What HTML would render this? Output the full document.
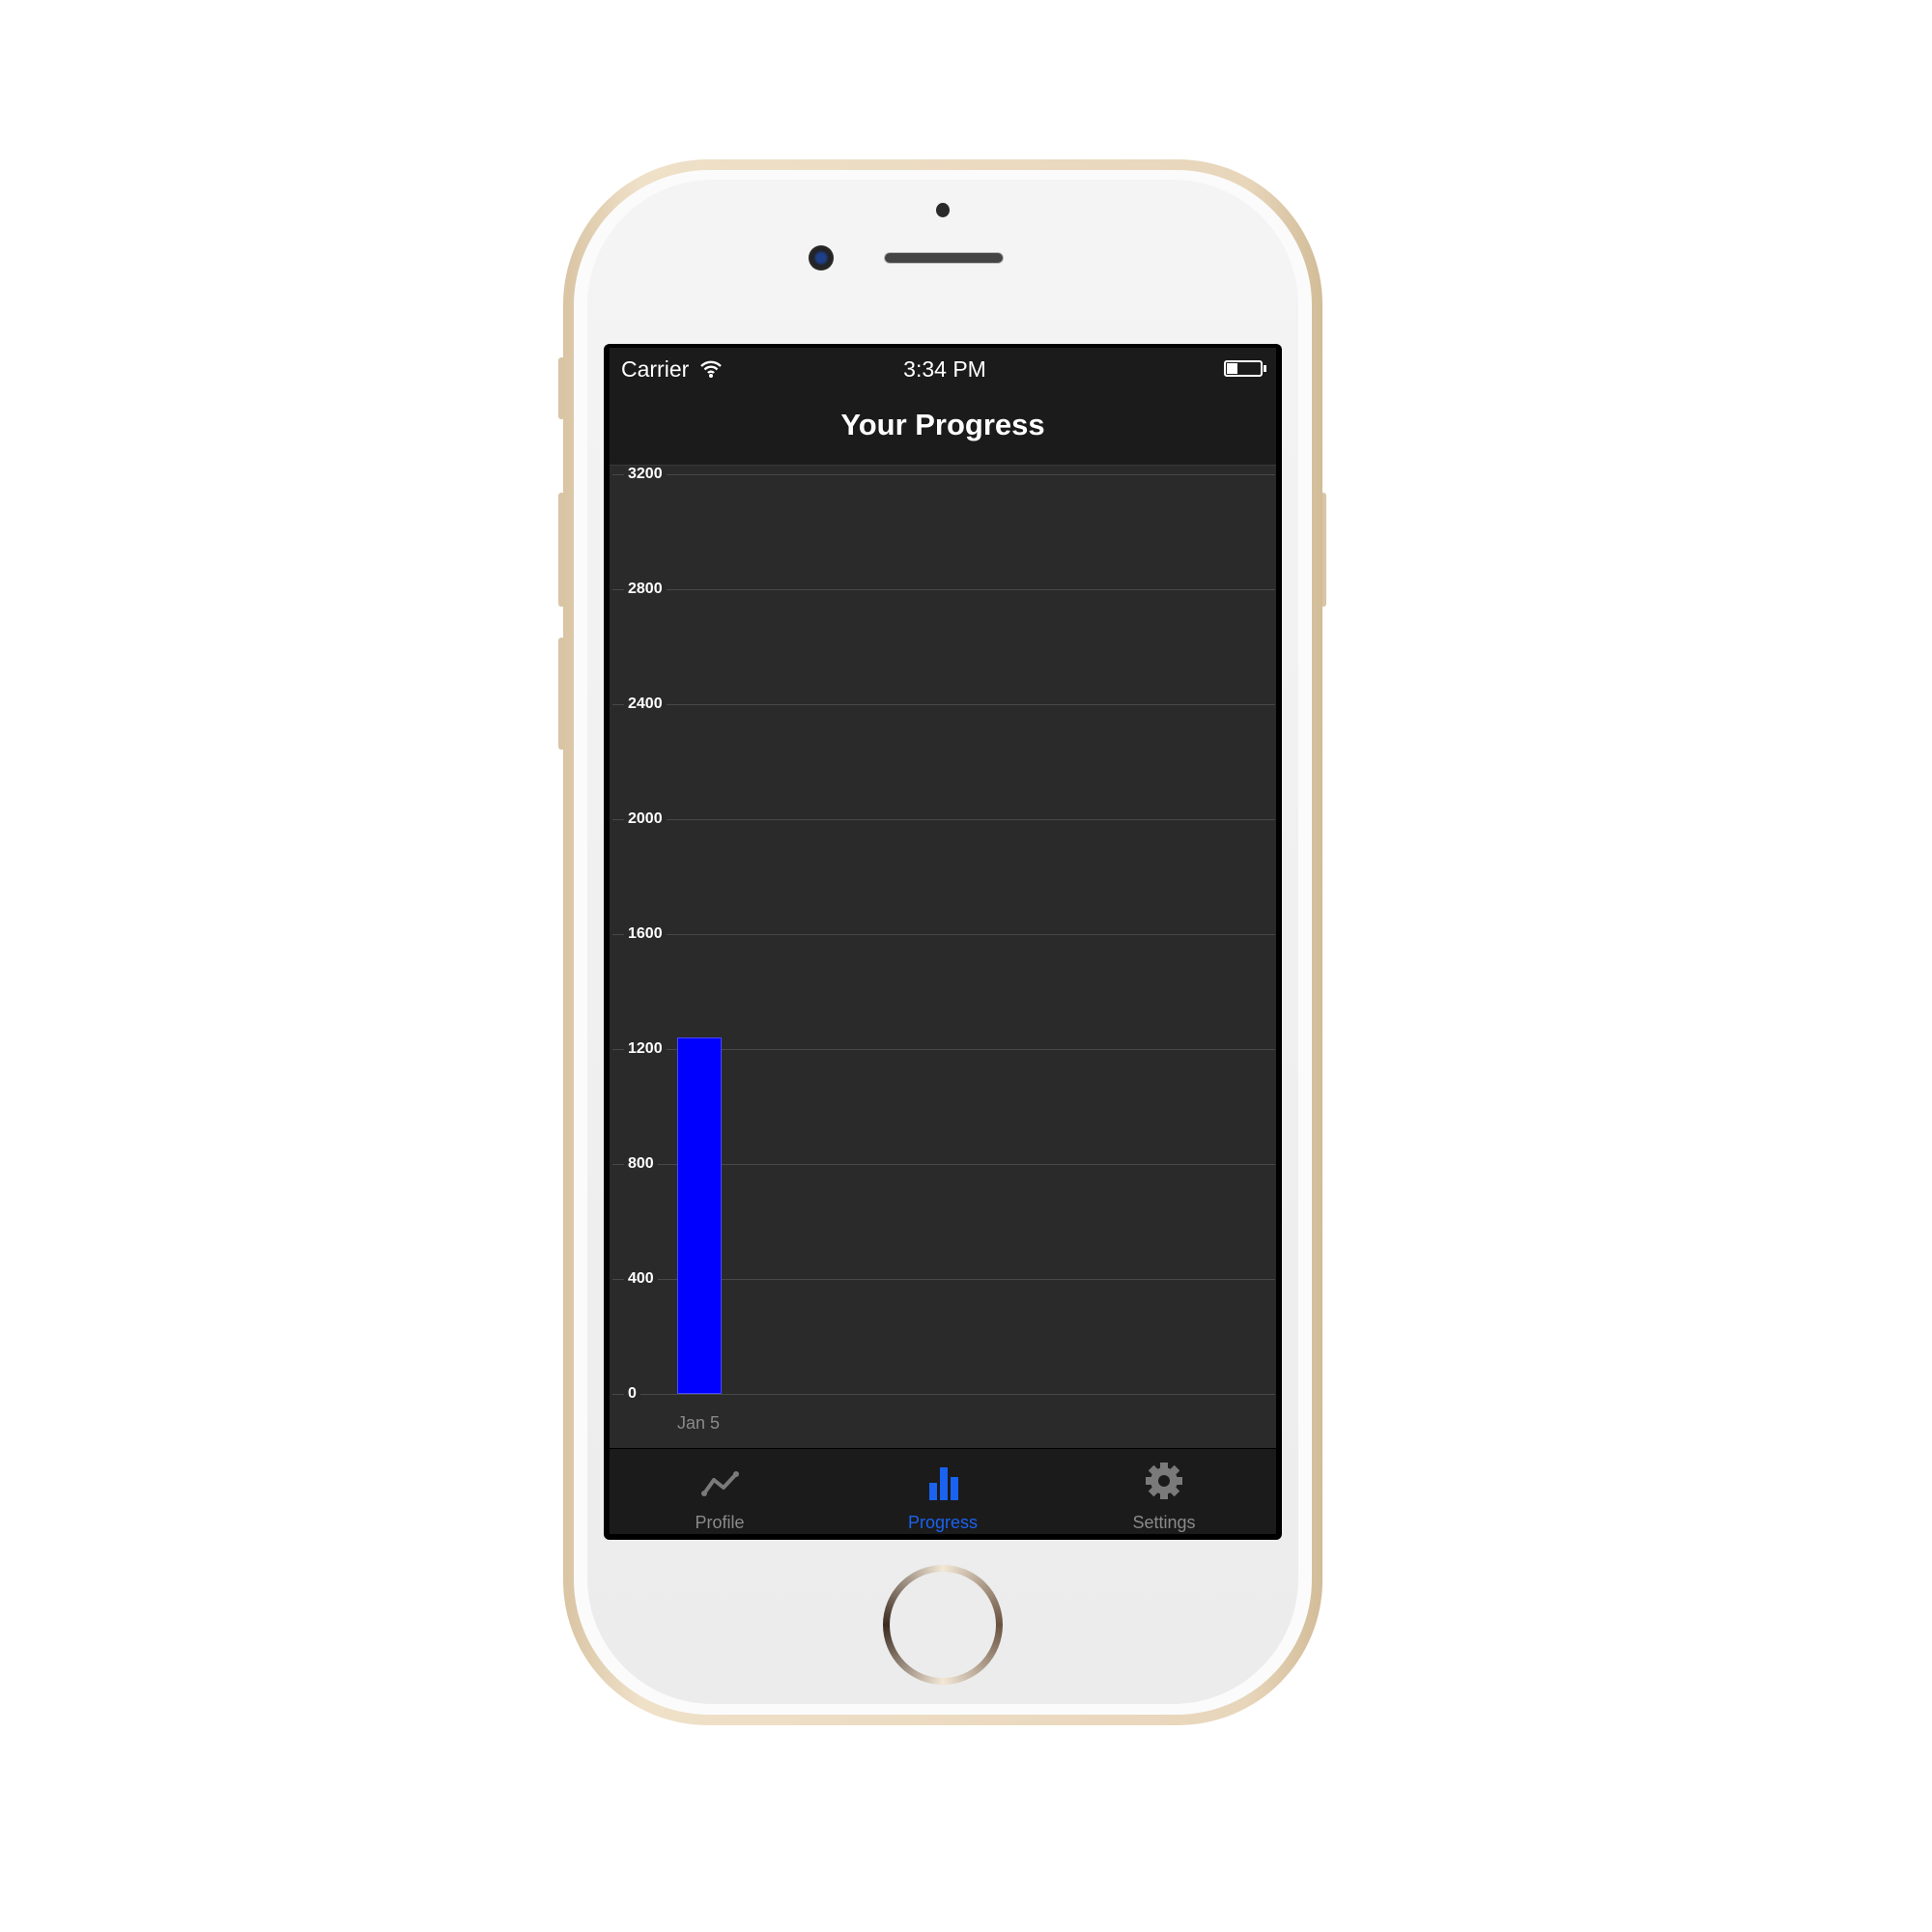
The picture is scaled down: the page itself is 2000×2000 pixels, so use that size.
<!DOCTYPE html>
<html><head><meta charset="utf-8"><style>
*{margin:0;padding:0;box-sizing:border-box}
body{width:2000px;height:2000px;background:#fff;position:relative;overflow:hidden;font-family:"Liberation Sans",sans-serif}
.a{position:absolute}
.body{left:583px;top:165px;width:786px;height:1621px;border-radius:150px;background:linear-gradient(90deg,#d9c4a3,#efe0c8 10%,#e8d6bb 90%,#d2bc98);}
.face{left:594px;top:176px;width:764px;height:1599px;border-radius:140px;background:#fbfbfb;}
.face2{left:608px;top:186px;width:736px;height:1578px;border-radius:130px;background:linear-gradient(#f4f4f4,#ebeceb);}
.btn{background:#d8c5a5;width:7px;border-radius:3px}
.screen{left:625px;top:356px;width:702px;height:1238px;background:#000;border-radius:6px}
.lbl{color:#fff;font-weight:bold;font-size:16px;position:absolute;left:650px;line-height:16px}
.grid{position:absolute;left:634px;width:686px;height:1px;background:#484848}
.tab{position:absolute;top:1566px;font-size:18px;width:200px;text-align:center;color:#8a8a8a}
</style></head><body>
<div class="a btn" style="left:578px;top:370px;height:64px"></div>
<div class="a btn" style="left:578px;top:510px;height:118px"></div>
<div class="a btn" style="left:578px;top:660px;height:116px"></div>
<div class="a btn" style="left:1366px;top:510px;height:118px"></div>
<div class="a body"></div>
<div class="a face"></div>
<div class="a face2"></div>
<div class="a" style="left:969px;top:210px;width:14px;height:15px;border-radius:50%;background:#2a2a2a"></div>
<div class="a" style="left:837px;top:254px;width:26px;height:26px;border-radius:50%;background:radial-gradient(#1f3f8a 25%,#222 45%,#333)"></div>
<div class="a" style="left:915px;top:261px;width:124px;height:12px;border-radius:6px;background:#444;border:1px solid #bbb"></div>
<div class="a screen"></div>
<div class="a" style="left:631px;top:360px;width:690px;height:121px;background:#1b1b1b"></div>
<div class="a" style="left:643px;top:369px;color:#fff;font-size:23px">Carrier</div>
<svg class="a" style="left:724px;top:372px" width="24" height="20" viewBox="0 0 24 20"><path d="M2 7a14 14 0 0 1 20 0M5.5 10.5a9 9 0 0 1 13 0M9 14a4 4 0 0 1 6 0" stroke="#fff" stroke-width="2.4" fill="none"/><circle cx="12" cy="17" r="2" fill="#fff"/></svg>
<div class="a" style="left:878px;top:369px;width:200px;text-align:center;color:#fff;font-size:23px">3:34 PM</div>
<div class="a" style="left:1267px;top:373px;width:40px;height:17px;border:2px solid #fff;border-radius:3px"><div style="width:11px;height:11px;margin:1px;background:#fff"></div></div>
<div class="a" style="left:1308px;top:378px;width:3px;height:7px;background:#fff"></div>
<div class="a" style="left:776px;top:422px;width:400px;text-align:center;color:#fff;font-size:31px;font-weight:bold">Your Progress</div>
<div class="a" style="left:631px;top:481px;width:690px;height:1018px;background:#2a2a2a;border-top:1px solid #3a3a3a"></div>
<div class="grid" style="top:491px"></div><div class="lbl" style="top:483px;background:#2a2a2a;padding:0 4px;margin-left:-4px">3200</div>
<div class="grid" style="top:610px"></div><div class="lbl" style="top:602px;background:#2a2a2a;padding:0 4px;margin-left:-4px">2800</div>
<div class="grid" style="top:729px"></div><div class="lbl" style="top:721px;background:#2a2a2a;padding:0 4px;margin-left:-4px">2400</div>
<div class="grid" style="top:848px"></div><div class="lbl" style="top:840px;background:#2a2a2a;padding:0 4px;margin-left:-4px">2000</div>
<div class="grid" style="top:967px"></div><div class="lbl" style="top:959px;background:#2a2a2a;padding:0 4px;margin-left:-4px">1600</div>
<div class="grid" style="top:1086px"></div><div class="lbl" style="top:1078px;background:#2a2a2a;padding:0 4px;margin-left:-4px">1200</div>
<div class="grid" style="top:1205px"></div><div class="lbl" style="top:1197px;background:#2a2a2a;padding:0 4px;margin-left:-4px">800</div>
<div class="grid" style="top:1324px"></div><div class="lbl" style="top:1316px;background:#2a2a2a;padding:0 4px;margin-left:-4px">400</div>
<div class="grid" style="top:1443px"></div><div class="lbl" style="top:1435px;background:#2a2a2a;padding:0 4px;margin-left:-4px">0</div>
<div class="a" style="left:701px;top:1074px;width:46px;height:369px;background:#0000ff;border:1px solid #4a4aff"></div>
<div class="a" style="left:673px;top:1463px;width:100px;text-align:center;color:#8a8a8a;font-size:18px">Jan 5</div>
<div class="a" style="left:631px;top:1499px;width:690px;height:89px;background:#1b1b1b;border-top:1px solid #000"></div>
<svg class="a" style="left:725px;top:1520px" width="42" height="30" viewBox="0 0 42 30"><path d="M4 26L14 12L24 20L37 6" stroke="#7a7a7a" stroke-width="4" fill="none" stroke-linejoin="round"/><circle cx="4" cy="26" r="3" fill="#7a7a7a"/><circle cx="37" cy="6" r="3" fill="#7a7a7a"/></svg>
<div class="tab" style="left:645px">Profile</div>
<svg class="a" style="left:961px;top:1519px" width="32" height="34"><rect x="1" y="16" width="8" height="18" fill="#1a62f0"/><rect x="12" y="0" width="8" height="34" fill="#1a62f0"/><rect x="23" y="10" width="8" height="24" fill="#1a62f0"/></svg>
<div class="tab" style="left:876px;color:#1a62f0">Progress</div>
<svg class="a" style="left:1186px;top:1514px" width="38" height="38" viewBox="-19 -19 38 38"><g fill="#7a7a7a"><circle r="14"/><g id="t"><rect x="-4" y="-19" width="8" height="8"/></g><use href="#t" transform="rotate(45)"/><use href="#t" transform="rotate(90)"/><use href="#t" transform="rotate(135)"/><use href="#t" transform="rotate(180)"/><use href="#t" transform="rotate(225)"/><use href="#t" transform="rotate(270)"/><use href="#t" transform="rotate(315)"/></g><circle r="6" fill="#1b1b1b"/></svg>
<div class="tab" style="left:1105px">Settings</div>
<div class="a" style="left:914px;top:1620px;width:124px;height:124px;border-radius:50%;background:conic-gradient(#f3e7d6,#6a5240 25%,#f3e7d6 50%,#3a2a20 75%,#f3e7d6);"></div>
<div class="a" style="left:921px;top:1627px;width:110px;height:110px;border-radius:50%;background:#ebeceb"></div>
</body></html>
